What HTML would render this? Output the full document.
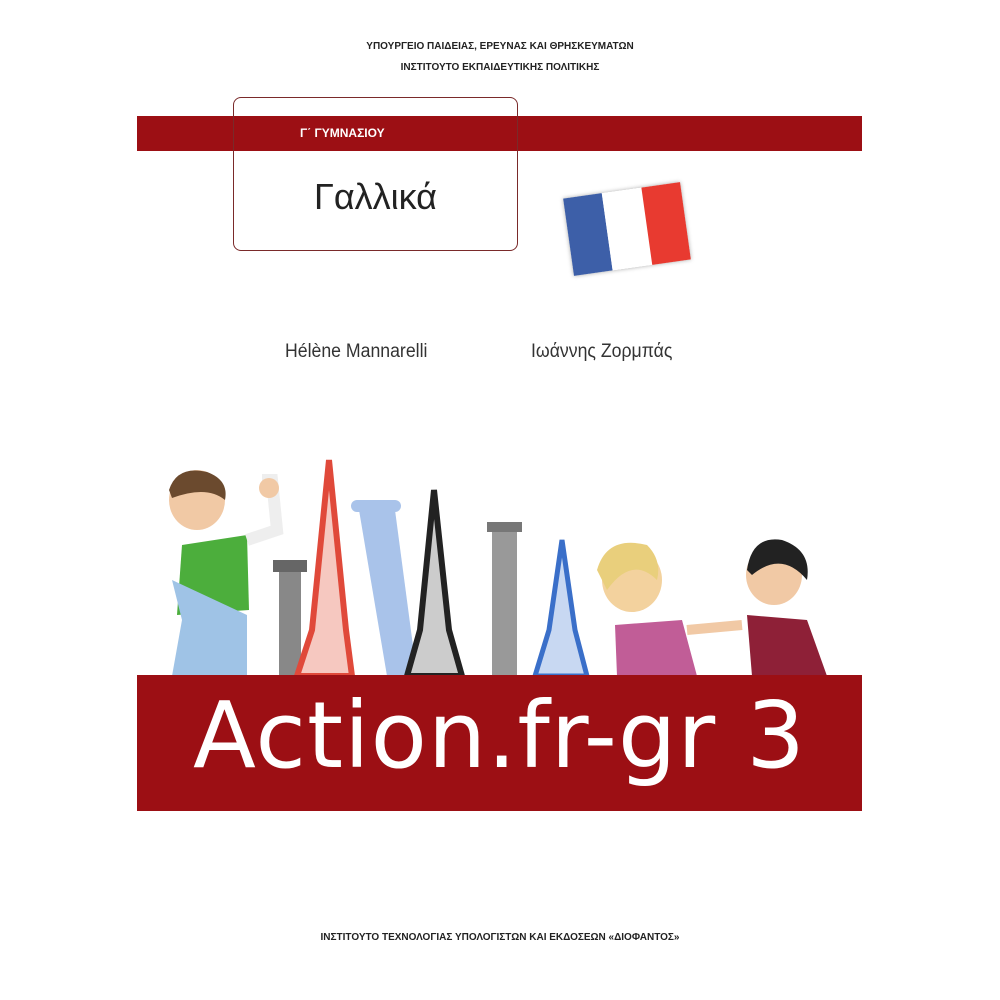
<!DOCTYPE html>
<html><head><meta charset="utf-8"><style>
body{margin:0;width:1000px;height:1000px;background:#fff;position:relative;overflow:hidden;font-family:"Liberation Sans","DejaVu Sans",sans-serif}
.a{position:absolute}
.t{font-weight:bold;font-size:10px;color:#222;text-align:center;width:1000px;left:0}
</style></head><body>
<div class="a t" style="top:41px">ΥΠΟΥΡΓΕΙΟ ΠΑΙΔΕΙΑΣ, ΕΡΕΥΝΑΣ ΚΑΙ ΘΡΗΣΚΕΥΜΑΤΩΝ</div>
<div class="a t" style="top:62px">ΙΝΣΤΙΤΟΥΤΟ ΕΚΠΑΙΔΕΥΤΙΚΗΣ ΠΟΛΙΤΙΚΗΣ</div>
<div class="a" style="left:137px;top:116px;width:725px;height:35px;background:#9c0f14"></div>
<div class="a" style="left:233px;top:97px;width:283px;height:152px;border:1.5px solid #7a2a2a;border-radius:8px"></div>
<div class="a" style="left:235px;top:116px;width:281px;height:35px;background:#9c0f14"></div>
<div class="a" style="left:300px;top:126px;color:#fff;font-weight:bold;font-size:12px">Γ΄ ΓΥΜΝΑΣΙΟΥ</div>
<div class="a" style="left:234px;top:176px;width:283px;text-align:center;font-size:36px;color:#222">Γαλλικά</div>
<div class="a" style="left:568px;top:190px;width:118px;height:78px;transform:rotate(-8deg);display:flex;box-shadow:0 0 4px #aaa">
<div style="flex:1;background:#3d5fa8"></div><div style="flex:1;background:#fff"></div><div style="flex:1;background:#e83a30"></div></div>
<div class="a" style="left:285px;top:341px;font-size:19px;color:#333;transform:scaleX(0.93);transform-origin:left">Hélène Mannarelli</div>
<div class="a" style="left:531px;top:341px;font-size:19px;color:#333;transform:scaleX(0.93);transform-origin:left">Ιωάννης Ζορμπάς</div>
<svg class="a" style="left:137px;top:450px" width="725" height="226" viewBox="0 0 725 226">
<ellipse cx="60" cy="50" rx="28" ry="30" fill="#f1c9a5"/><path d="M32 40 Q40 15 70 22 Q92 30 88 50 Q70 35 35 48Z" fill="#6b4a2e"/>
<path d="M45 95 L110 85 L112 160 L40 165Z" fill="#4cae3c"/>
<path d="M35 130 L45 170 L35 226 L110 226 L110 165Z" fill="#9fc3e6"/>
<path d="M110 90 L140 80 L135 30 L125 30" stroke="#eee" stroke-width="12" fill="none"/>
<circle cx="132" cy="38" r="10" fill="#f1c9a5"/>
<rect x="142" y="118" width="22" height="108" fill="#888"/><rect x="136" y="110" width="34" height="12" fill="#666"/>
<path d="M192 10 L175 180 L160 226 L215 226 L209 180Z" fill="#f6c8c0" stroke="#e0493a" stroke-width="6"/>
<path d="M222 60 L250 226 L280 226 L258 60Z" fill="#a9c3ea"/><rect x="214" y="50" width="50" height="12" rx="6" fill="#a9c3ea"/>
<path d="M297 40 L283 180 L270 226 L325 226 L312 180Z" fill="#ccc" stroke="#222" stroke-width="6"/>
<rect x="355" y="80" width="25" height="146" fill="#999"/><rect x="350" y="72" width="35" height="10" fill="#777"/>
<path d="M425 90 L412 180 L398 226 L450 226 L438 180Z" fill="#c8d8f2" stroke="#3a6fc9" stroke-width="5"/>
<ellipse cx="495" cy="130" rx="30" ry="32" fill="#f3d29e"/><path d="M460 120 Q470 85 510 95 Q525 110 520 130 Q495 105 470 140Z" fill="#e9cf7c"/>
<path d="M478 175 L545 170 L560 226 L480 226Z" fill="#c15d97"/>
<ellipse cx="637" cy="125" rx="28" ry="30" fill="#f1c9a5"/><path d="M610 120 Q615 85 645 90 Q675 100 670 130 Q645 100 615 125Z" fill="#222"/>
<path d="M610 165 L670 170 L690 226 L615 226Z" fill="#8e2037"/>
<path d="M550 180 L605 175" stroke="#f1c9a5" stroke-width="10"/>
</svg>
<div class="a" style="left:137px;top:675px;width:725px;height:136px;background:#9c0f14"></div>
<div class="a" style="left:137px;top:682px;width:725px;text-align:center;color:#fff;font-size:92px;font-family:'DejaVu Sans',sans-serif;letter-spacing:1px">Action.fr-gr 3</div>
<div class="a t" style="top:932px">ΙΝΣΤΙΤΟΥΤΟ ΤΕΧΝΟΛΟΓΙΑΣ ΥΠΟΛΟΓΙΣΤΩΝ ΚΑΙ ΕΚΔΟΣΕΩΝ «ΔΙΟΦΑΝΤΟΣ»</div>
</body></html>
